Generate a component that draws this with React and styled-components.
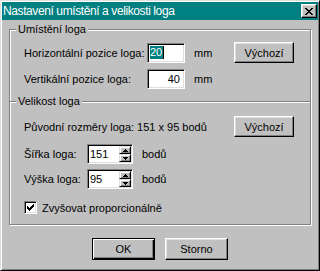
import React from 'react';
import styled, { createGlobalStyle } from 'styled-components';

const GlobalStyle = createGlobalStyle`
  html, body {
    margin: 0;
    padding: 0;
    background: #c0c0c0;
  }
`;

const Window = styled.div`
  width: 320px;
  height: 271px;
  box-sizing: border-box;
  background: #c0c0c0;
  border: 1px solid;
  border-color: #dfdfdf #000 #000 #dfdfdf;
  box-shadow: inset 1px 1px #fff, inset -1px -1px #808080;
  padding: 1px;
  display: flex;
  flex-direction: column;
  font-family: "Liberation Sans", Arial, sans-serif;
  font-size: 11px;
  color: #000;
`;

const TitleBar = styled.div`
  height: 18px;
  flex-shrink: 0;
  background: #008080;
  color: #fff;
  display: flex;
  align-items: center;
  justify-content: space-between;
  padding: 0 1px 0 1px;
  font-size: 12px;
  letter-spacing: -0.4px;
`;

const CloseButton = styled.div`
  width: 16px;
  height: 14px;
  box-sizing: border-box;
  background: #c0c0c0;
  border: 1px solid;
  border-color: #fff #000 #000 #fff;
  box-shadow: inset -1px -1px #808080, inset 1px 1px #dfdfdf;
  display: flex;
  align-items: center;
  justify-content: center;
`;

const Content = styled.div`
  flex: 1;
  display: flex;
  flex-direction: column;
  padding: 3px 7px 0;
`;

const Group = styled.fieldset`
  margin: ${p => p.$margin || '0'};
  padding: 0;
  min-inline-size: 0;
  border: 1px solid #808080;
  border-bottom: ${p => (p.$open ? 'none' : '1px solid #808080')};
  box-shadow: inset 1px 1px #fff, 1px 1px #fff;
`;

const Legend = styled.legend`
  margin-left: 6px;
  padding: 0 2px;
  line-height: 13px;
  background: #c0c0c0;
`;

const GroupBody = styled.div`
  display: flex;
  flex-direction: column;
  padding: ${p => p.$pad};
`;

const Row = styled.div`
  display: flex;
  align-items: center;
  margin-top: ${p => p.$mt || 0}px;
`;

const Label = styled.span`
  width: ${p => p.$w}px;
  flex-shrink: 0;
  white-space: nowrap;
`;

const Unit = styled.span`
  width: ${p => p.$w}px;
  padding-left: 9px;
  box-sizing: border-box;
  flex-shrink: 0;
`;

const Field = styled.div`
  width: ${p => p.$w}px;
  height: 20px;
  box-sizing: border-box;
  flex-shrink: 0;
  background: #fff;
  border: 1px solid;
  border-color: #808080 #fff #fff #808080;
  box-shadow: inset 1px 1px #000, inset -1px -1px #dfdfdf;
  display: flex;
  align-items: center;
  justify-content: ${p => (p.$right ? 'flex-end' : 'flex-start')};
  padding: ${p => (p.$right ? '0 4px 0 0' : '0 0 0 2px')};
`;

const Selected = styled.span`
  background: #008080;
  color: #fff;
  line-height: 13px;
  padding: 0 1px 0 0;
  border-right: 1px solid #000;
`;

const SpinText = styled.span`
  flex: 1;
`;

const SpinColumn = styled.div`
  display: flex;
  flex-direction: column;
  margin-right: 1px;
`;

const SpinButton = styled.div`
  width: 12px;
  height: 8px;
  box-sizing: border-box;
  background: #c0c0c0;
  border: 1px solid;
  border-color: #dfdfdf #000 #000 #dfdfdf;
  box-shadow: inset 1px 1px #fff, inset -1px -1px #808080;
  display: flex;
  align-items: center;
  justify-content: center;
`;

const Button = styled.div`
  width: ${p => p.$w}px;
  height: ${p => p.$h}px;
  box-sizing: border-box;
  flex-shrink: 0;
  background: #c0c0c0;
  display: flex;
  align-items: center;
  justify-content: center;
  border: 1px solid;
  border-color: ${p => (p.$default ? '#000' : '#fff #000 #000 #fff')};
  box-shadow: ${p =>
    p.$default
      ? 'inset 1px 1px #fff, inset -1px -1px #000, inset -2px -2px #808080'
      : 'inset -1px -1px #808080, inset 1px 1px #dfdfdf'};
  margin-left: ${p => p.$ml || 0}px;
`;

const CheckBox = styled.div`
  width: 13px;
  height: 13px;
  box-sizing: border-box;
  flex-shrink: 0;
  background: #fff;
  border: 1px solid;
  border-color: #808080 #fff #fff #808080;
  box-shadow: inset 1px 1px #000, inset -1px -1px #dfdfdf;
  display: flex;
  align-items: center;
  justify-content: center;
  margin-right: 5px;
`;

const Footer = styled.div`
  display: flex;
  justify-content: center;
  gap: 10px;
  margin-top: 13px;
`;

const pixel = { shapeRendering: 'crispEdges' };

function CloseIcon() {
  return (
    <svg width="8" height="7" viewBox="0 0 8 7" style={pixel}>
      <path
        fill="#000"
        d="M0 0h2v1H0z M6 0h2v1H6z M1 1h2v1H1z M5 1h2v1H5z M2 2h4v1H2z M3 3h2v1H3z M2 4h4v1H2z M1 5h2v1H1z M5 5h2v1H5z M0 6h2v1H0z M6 6h2v1H6z"
      />
    </svg>
  );
}

function Arrow({ down }) {
  return (
    <svg width="5" height="3" viewBox="0 0 5 3" style={pixel}>
      <path
        fill="#000"
        d={down ? 'M0 0h5v1H0z M1 1h3v1H1z M2 2h1v1H2z' : 'M2 0h1v1H2z M1 1h3v1H1z M0 2h5v1H0z'}
      />
    </svg>
  );
}

function CheckMark() {
  return (
    <svg width="7" height="7" viewBox="0 0 7 7" style={pixel}>
      <path
        fill="#000"
        d="M6 0h1v1H6z M5 1h2v1H5z M0 2h1v1H0z M4 2h3v1H4z M0 3h2v1H0z M3 3h3v1H3z M0 4h5v1H0z M1 5h3v1H1z M2 6h1v1H2z"
      />
    </svg>
  );
}

function Spinner({ value }) {
  return (
    <Field $w={46}>
      <SpinText>{value}</SpinText>
      <SpinColumn>
        <SpinButton><Arrow /></SpinButton>
        <SpinButton><Arrow down /></SpinButton>
      </SpinColumn>
    </Field>
  );
}

export default function App() {
  return (
    <>
      <GlobalStyle />
      <Window>
        <TitleBar>
          <span>Nastavení umístění a velikosti loga</span>
          <CloseButton><CloseIcon /></CloseButton>
        </TitleBar>
        <Content>
          <Group $open>
            <Legend>Umístění loga</Legend>
            <GroupBody $pad="6px 0 12px 14px">
              <Row>
                <Label $w={123}>Horizontální pozice loga:</Label>
                <Field $w={38}><Selected>20</Selected></Field>
                <Unit $w={49}>mm</Unit>
                <Button $w={60} $h={21}>Výchozí</Button>
              </Row>
              <Row $mt={6}>
                <Label $w={123}>Vertikální pozice loga:</Label>
                <Field $w={38} $right>40</Field>
                <Unit $w={49}>mm</Unit>
              </Row>
            </GroupBody>
          </Group>
          <Group $margin="-6px 0 0">
            <Legend>Velikost loga</Legend>
            <GroupBody $pad="8px 0 10px 14px">
              <Row>
                <Label $w={210}>Původní rozměry loga: 151 x 95 bodů</Label>
                <Button $w={60} $h={21}>Výchozí</Button>
              </Row>
              <Row $mt={7}>
                <Label $w={63}>Šířka loga:</Label>
                <Spinner value="151" />
                <Unit>bodů</Unit>
              </Row>
              <Row $mt={5}>
                <Label $w={63}>Výška loga:</Label>
                <Spinner value="95" />
                <Unit>bodů</Unit>
              </Row>
              <Row $mt={12}>
                <CheckBox><CheckMark /></CheckBox>
                <span>Zvyšovat proporcionálně</span>
              </Row>
            </GroupBody>
          </Group>
          <Footer>
            <Button $w={63} $h={22} $default>OK</Button>
            <Button $w={63} $h={22}>Storno</Button>
          </Footer>
        </Content>
      </Window>
    </>
  );
}
